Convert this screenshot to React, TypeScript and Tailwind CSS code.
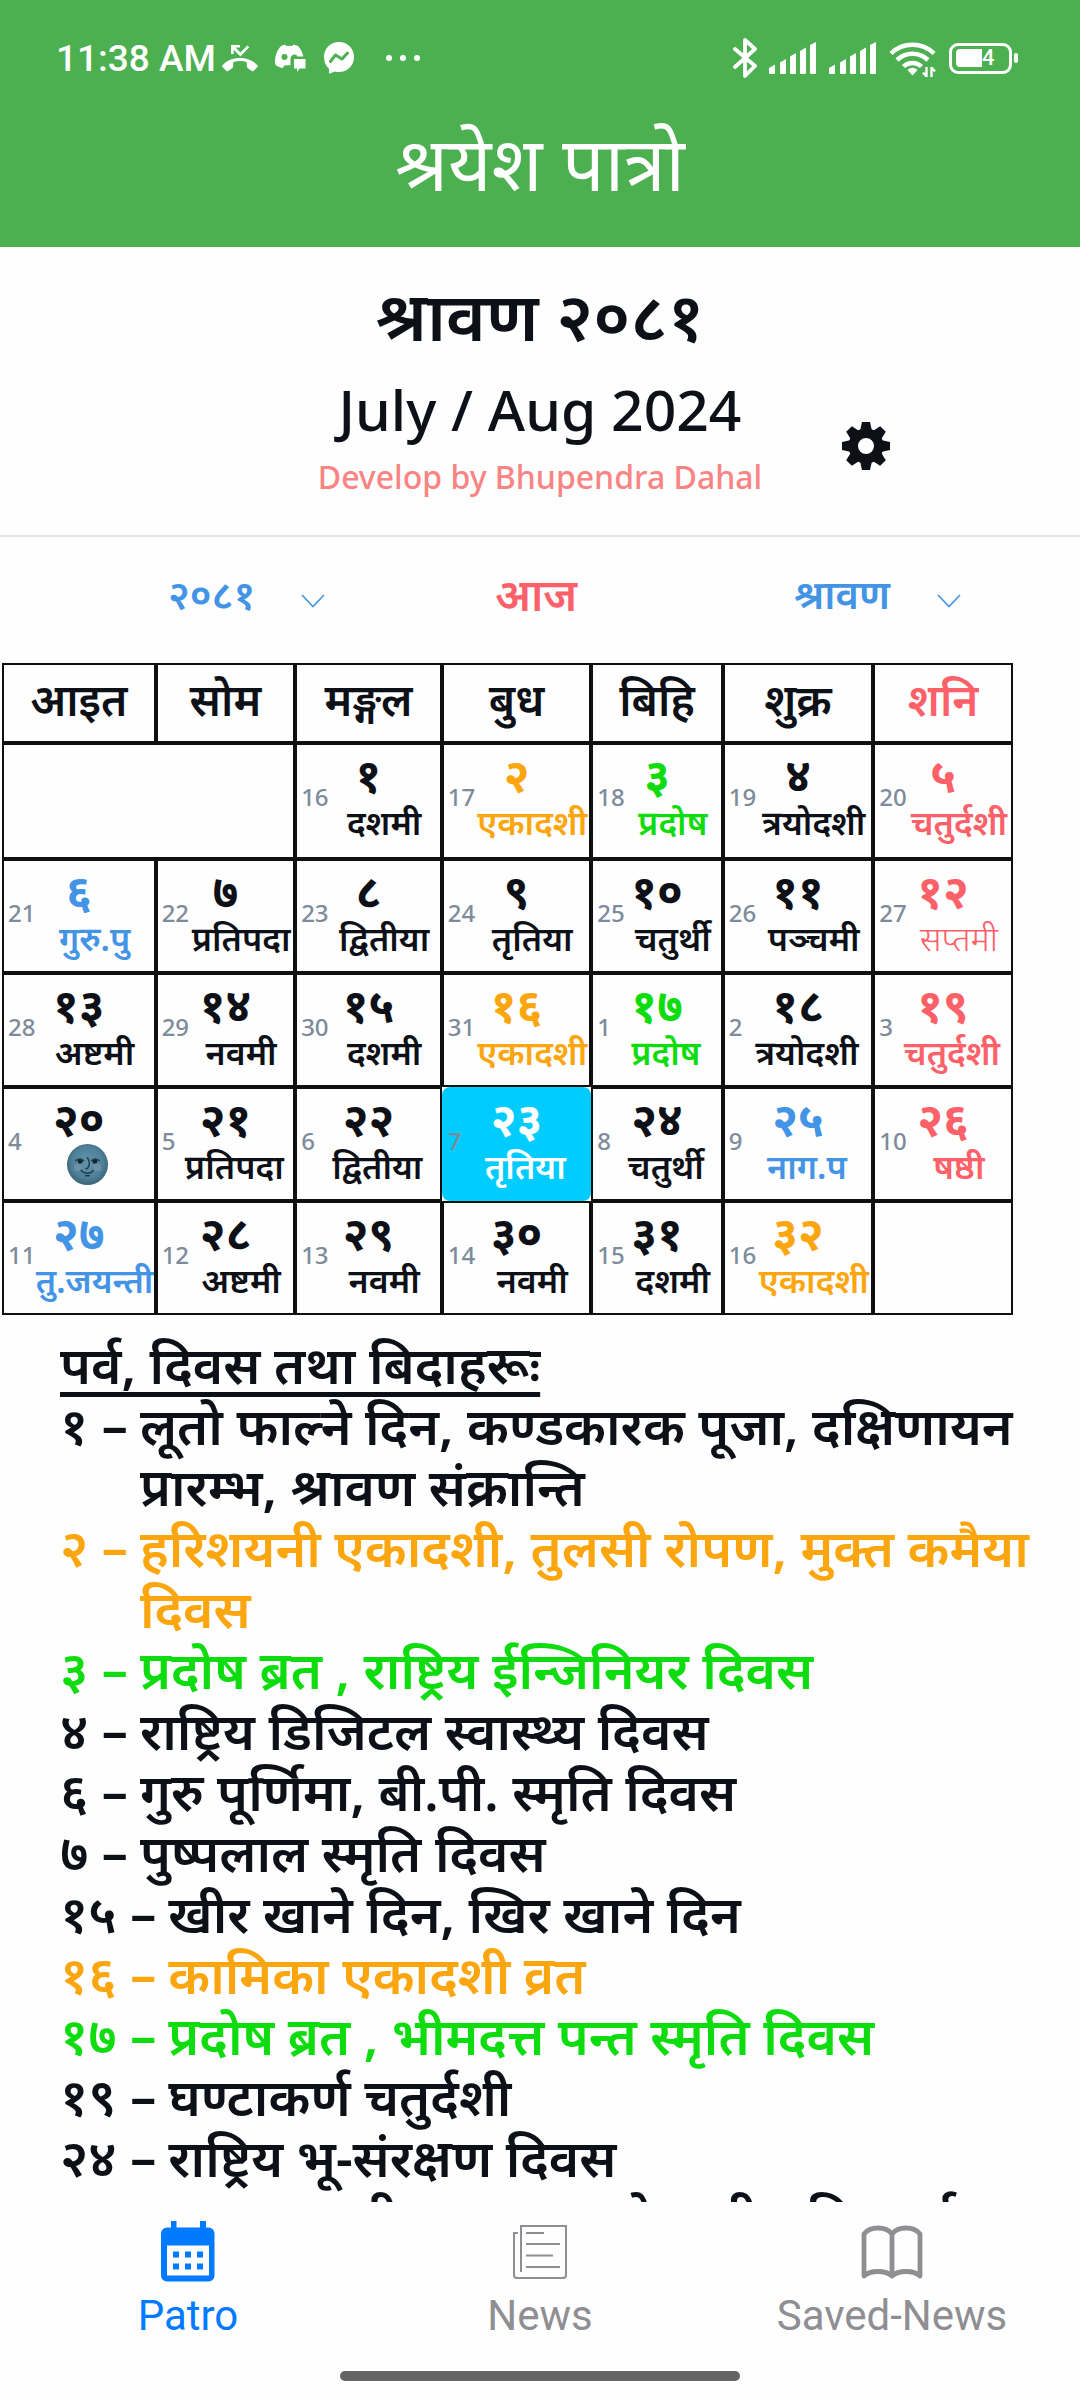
import React from "react";

type Tone = "ink" | "amber" | "green" | "red" | "blue" | "white";

const toneClass: Record<Tone, string> = {
  ink: "text-[#0d1117]",
  amber: "text-[#fba50f]",
  green: "text-[#0fdc0f]",
  red: "text-[#fc6068]",
  blue: "text-[#4394e5]",
  white: "text-white",
};

type Day = {
  ad: string;
  bs: string;
  tithi: string;
  tone?: Tone;
  today?: boolean;
  moon?: boolean;
  light?: boolean;
};

const weekdays = ["आइत", "सोम", "मङ्गल", "बुध", "बिहि", "शुक्र", "शनि"];

const weeks: (Day | null)[][] = [
  [
    { ad: "16", bs: "१", tithi: "दशमी" },
    { ad: "17", bs: "२", tithi: "एकादशी", tone: "amber" },
    { ad: "18", bs: "३", tithi: "प्रदोष", tone: "green" },
    { ad: "19", bs: "४", tithi: "त्रयोदशी" },
    { ad: "20", bs: "५", tithi: "चतुर्दशी", tone: "red" },
  ],
  [
    { ad: "21", bs: "६", tithi: "गुरु.पु", tone: "blue" },
    { ad: "22", bs: "७", tithi: "प्रतिपदा" },
    { ad: "23", bs: "८", tithi: "द्वितीया" },
    { ad: "24", bs: "९", tithi: "तृतिया" },
    { ad: "25", bs: "१०", tithi: "चतुर्थी" },
    { ad: "26", bs: "११", tithi: "पञ्चमी" },
    { ad: "27", bs: "१२", tithi: "सप्तमी", tone: "red", light: true },
  ],
  [
    { ad: "28", bs: "१३", tithi: "अष्टमी" },
    { ad: "29", bs: "१४", tithi: "नवमी" },
    { ad: "30", bs: "१५", tithi: "दशमी" },
    { ad: "31", bs: "१६", tithi: "एकादशी", tone: "amber" },
    { ad: "1", bs: "१७", tithi: "प्रदोष", tone: "green" },
    { ad: "2", bs: "१८", tithi: "त्रयोदशी" },
    { ad: "3", bs: "१९", tithi: "चतुर्दशी", tone: "red" },
  ],
  [
    { ad: "4", bs: "२०", tithi: "", moon: true },
    { ad: "5", bs: "२१", tithi: "प्रतिपदा" },
    { ad: "6", bs: "२२", tithi: "द्वितीया" },
    { ad: "7", bs: "२३", tithi: "तृतिया", tone: "white", today: true },
    { ad: "8", bs: "२४", tithi: "चतुर्थी" },
    { ad: "9", bs: "२५", tithi: "नाग.प", tone: "blue" },
    { ad: "10", bs: "२६", tithi: "षष्ठी", tone: "red" },
  ],
  [
    { ad: "11", bs: "२७", tithi: "तु.जयन्ती", tone: "blue" },
    { ad: "12", bs: "२८", tithi: "अष्टमी" },
    { ad: "13", bs: "२९", tithi: "नवमी" },
    { ad: "14", bs: "३०", tithi: "नवमी" },
    { ad: "15", bs: "३१", tithi: "दशमी" },
    { ad: "16", bs: "३२", tithi: "एकादशी", tone: "amber" },
    null,
  ],
];

const events: { day: string; text: string; tone?: Tone }[] = [
  { day: "१", text: "लूतो फाल्ने दिन, कण्डकारक पूजा, दक्षिणायन प्रारम्भ, श्रावण संक्रान्ति" },
  { day: "२", text: "हरिशयनी एकादशी, तुलसी रोपण, मुक्त कमैया दिवस", tone: "amber" },
  { day: "३", text: "प्रदोष ब्रत , राष्ट्रिय ईन्जिनियर दिवस", tone: "green" },
  { day: "४", text: "राष्ट्रिय डिजिटल स्वास्थ्य दिवस" },
  { day: "६", text: "गुरु पूर्णिमा, बी.पी. स्मृति दिवस" },
  { day: "७", text: "पुष्पलाल स्मृति दिवस" },
  { day: "१५", text: "खीर खाने दिन, खिर खाने दिन" },
  { day: "१६", text: "कामिका एकादशी व्रत", tone: "amber" },
  { day: "१७", text: "प्रदोष ब्रत , भीमदत्त पन्त स्मृति दिवस", tone: "green" },
  { day: "१९", text: "घण्टाकर्ण चतुर्दशी" },
  { day: "२४", text: "राष्ट्रिय भू-संरक्षण दिवस" },
  { day: "२५", text: "नाग पञ्चमी, फल जलको बागी र दिन पर्व" },
];

function MissedCallIcon() {
  return (
    <svg viewBox="0 0 36 28" className="h-7 w-9" fill="currentColor" aria-hidden="true">
      <path d="M9 1h9v2.6h-4.5l4.9 5L25.4 1.4l1.9 1.9-8.9 9.2-6.7-6.8V10H9z" />
      <path d="M18 14c7 0 13 2.500 17.500 7.200.500.600.500 1.100 0 1.700l-4 4c-.500.500-1.200.500-1.700 0l-4.200-3c-.500-.400-.800-.800-.800-1.400v-4.300a22 22 0 0 0-13.600 0v4.300c0 .600-.300 1-.800 1.400l-4.200 3c-.500.500-1.200.500-1.700 0l-4-4c-.500-.600-.500-1.100 0-1.700C5 16.500 11 14 18 14z" />
    </svg>
  );
}

function DiscordIcon() {
  return (
    <svg viewBox="0 0 32 28" className="h-7 w-8" aria-hidden="true">
      <path
        fill="currentColor"
        d="M7 2l4-1.500 1.200 1.500a20 20 0 0 1 6 0L19.500.500 24 2c3 3.500 5.500 8 5.500 12H18v7l-8 .500L9 24C5 23.500 2.500 22 1 20 .500 13 3 6 7 2z"
      />
      <circle cx="10.500" cy="13" r="3" fill="#4caf50" />
      <path fill="#4caf50" d="M16.500 24V15c0-3 2-4.500 4-4.500 1.500 0 2.500.800 2.800 2H31v13H17z" />
      <path fill="currentColor" d="M20 15h11.500v9.500H25.500L23 28v-3.500h-3z" />
    </svg>
  );
}

function MessengerIcon() {
  return (
    <svg viewBox="0 0 30 32" className="h-8 w-[30px]" aria-hidden="true">
      <path
        fill="currentColor"
        d="M15 0c8.400 0 15 6.300 15 15s-6.600 15-15 15c-1.500 0-3-.200-4.300-.600L6 31.500c-.700.300-1-.100-1-.700v-4C1.800 24 0 19.800 0 15 0 6.300 6.600 0 15 0z"
      />
      <path
        d="M6.500 19.500l5-6.500 6.500 4 5.500-6"
        fill="none"
        stroke="#4caf50"
        strokeWidth="3"
        strokeLinejoin="round"
        strokeLinecap="round"
      />
    </svg>
  );
}

function BluetoothIcon() {
  return (
    <svg
      viewBox="0 0 24 40"
      className="h-10 w-6"
      fill="none"
      stroke="currentColor"
      strokeWidth="3.800"
      strokeLinecap="round"
      strokeLinejoin="round"
      aria-hidden="true"
    >
      <path d="M2 11l20 17-10 10V2l10 9L2 29" />
    </svg>
  );
}

function SignalIcon() {
  return (
    <svg viewBox="0 0 48 32" className="h-8 w-12" fill="currentColor" aria-hidden="true">
      <path d="M0 31v-5l6-3.500V31q0 1-1 1H1q-1 0-1-1z" />
      <path d="M11 31V20.500l6-3.500v14q0 1-1 1h-4q-1 0-1-1z" />
      <path d="M21 31V14.500l6-3.500v20q0 1-1 1h-4q-1 0-1-1z" />
      <path d="M31 31V9l6-3.500V31q0 1-1 1h-4q-1 0-1-1z" />
      <path d="M41 31V3l6-3v31q0 1-1 1h-4q-1 0-1-1z" />
    </svg>
  );
}

function WifiIcon() {
  return (
    <svg viewBox="0 0 48 37" className="h-[37px] w-12" aria-hidden="true">
      <g fill="none" stroke="currentColor" strokeWidth="4.500">
        <path d="M2 13.500a31 31 0 0 1 43 0" />
        <path d="M8 20a22.500 22.500 0 0 1 31 0" />
        <path d="M14.500 26.500a13 13 0 0 1 18 0" />
      </g>
      <path d="M18.500 30c3-3 7-3 10 0l-5 5.500z" fill="currentColor" />
      <path
        d="M37.500 27v10M34 32.500l3.500 4M42.500 37V27M46 31.500l-3.500-4"
        stroke="currentColor"
        strokeWidth="2.400"
        fill="none"
      />
    </svg>
  );
}

function BatteryIcon() {
  return (
    <span className="flex items-center gap-0.5" role="img" aria-label="Battery 4">
      <span className="flex h-[31px] w-[63px] items-center rounded-[9px] border-[3px] border-white px-1">
        <span className="h-[18px] w-[26px] rounded-l bg-white" />
        <span className="font-['Roboto'] text-[22px] leading-none font-medium">4</span>
      </span>
      <span className="h-2.5 w-1 rounded-full bg-white" />
    </span>
  );
}

function GearIcon() {
  const angles = [0, 45, 90, 135, 180, 225, 270, 315];
  return (
    <svg viewBox="0 0 48 48" className="h-12 w-12" fill="currentColor" aria-hidden="true">
      <path
        fillRule="evenodd"
        d="M24 6.500a17.500 17.500 0 1 1 0 35a17.500 17.500 0 0 1 0-35zm0 9.500a8 8 0 1 0 0 16a8 8 0 0 0 0-16z"
      />
      {angles.map((angle) => (
        <path key={angle} d="M20 0h8l2 9H18z" transform={`rotate(${angle} 24 24)`} />
      ))}
    </svg>
  );
}

function MoonFace() {
  return (
    <svg viewBox="0 0 44 44" className="h-[43px] w-[43px]" role="img" aria-label="औंसी">
      <defs>
        <radialGradient id="moon" cx="0.5" cy="0.45" r="0.55">
          <stop offset="0" stopColor="#6394ae" />
          <stop offset="0.7" stopColor="#4f8099" />
          <stop offset="1" stopColor="#396276" />
        </radialGradient>
      </defs>
      <circle cx="22" cy="22" r="21" fill="url(#moon)" />
      <circle cx="12" cy="25" r="4" fill="#8196a8" opacity="0.6" />
      <circle cx="32" cy="25" r="4" fill="#8196a8" opacity="0.6" />
      <circle cx="14.500" cy="18.500" r="2.600" fill="#16242c" />
      <circle cx="29.500" cy="18.500" r="2.600" fill="#16242c" />
      <path
        d="M10 18c2-2 6-2 8 0M26 18c2-2 6-2 8 0M22 15c2 4 3 7 0 11h-1.500M15.500 28c3 4 10 4 12.500 0M20 33.500h4"
        fill="none"
        stroke="#223c49"
        strokeWidth="1.500"
        strokeLinecap="round"
      />
    </svg>
  );
}

function Chevron() {
  return (
    <svg
      viewBox="0 0 24 14"
      className="pointer-events-none absolute right-0 top-1/2 h-3.5 w-6"
      fill="none"
      stroke="currentColor"
      strokeWidth="1.600"
      aria-hidden="true"
    >
      <path d="M1 1l11 11.500L23 1" />
    </svg>
  );
}

function CalendarIcon() {
  return (
    <svg viewBox="0 0 54 62" className="h-[62px] w-[54px]" fill="currentColor" aria-hidden="true">
      <path
        fillRule="evenodd"
        d="M10 0h5.500v6.500h23.500V0h6v6.500h2.500a6 6 0 0 1 6 6v42a6 6 0 0 1-6 6H6a6 6 0 0 1-6-6v-42a6 6 0 0 1 6-6h4zM6 24.500v30h42v-30z"
      />
      <path d="M12 30.500h6v6h-6zM24 30.500h6v6h-6zM36 30.500h6v6h-6zM12 42.500h6v6h-6zM24 42.500h6v6h-6zM36 42.500h6v6h-6z" />
    </svg>
  );
}

function NewspaperIcon() {
  return (
    <svg
      viewBox="0 0 54 62"
      className="h-[62px] w-[54px]"
      fill="none"
      stroke="currentColor"
      strokeWidth="2"
      aria-hidden="true"
    >
      <path d="M8 51V5h45v49q0 3-3 3H4q-3 0-3-3V12h4M13 12h18M13 23h34M13 34.500h27M13 46h34" />
    </svg>
  );
}

function BookIcon() {
  return (
    <svg
      viewBox="0 0 62 62"
      className="h-[62px] w-[62px]"
      fill="none"
      stroke="currentColor"
      strokeWidth="4.800"
      strokeLinejoin="round"
      aria-hidden="true"
    >
      <path d="M31 13C25 5 9 5 3 13v42c6-6 22-6 28 0 6-6 22-6 28 0V13C53 5 37 5 31 13zM31 13v42" />
    </svg>
  );
}

function Picker({ label, value, options, className }: { label: string; value: string; options: string[]; className: string }) {
  return (
    <div className={`relative text-[#4394e5] ${className}`}>
      <select
        aria-label={label}
        defaultValue={value}
        className="w-full appearance-none bg-transparent text-[40px] leading-[60px] font-semibold outline-none"
      >
        {options.map((option) => (
          <option key={option}>{option}</option>
        ))}
      </select>
      <Chevron />
    </div>
  );
}

function DayCell({ day }: { day: Day | null }) {
  if (!day) return <td className="border-2 border-[#0f1010]" />;
  const tone = toneClass[day.tone ?? "ink"];
  return (
    <td
      className={
        day.today
          ? "rounded-lg border-2 border-[#00ccff] bg-[#00ccff] p-0 align-top"
          : "border-2 border-[#0f1010] p-0 align-top"
      }
    >
      <div className={`flex flex-col pt-1 ${tone}`}>
        <div className="text-center text-[46px] leading-[50px] font-bold">{day.bs}</div>
        <div className="flex items-start pl-1">
          <span className="-mt-4 text-[24px] leading-[28px] font-medium text-[#7d8b9b]">{day.ad}</span>
          <span
            className={
              day.light
                ? "flex h-12 flex-1 justify-center text-[34px] leading-[46px] font-light whitespace-nowrap"
                : "flex h-12 flex-1 justify-center text-[34px] leading-[46px] font-semibold whitespace-nowrap"
            }
          >
            {day.moon ? <MoonFace /> : day.tithi}
          </span>
        </div>
      </div>
    </td>
  );
}

const navItems = [
  { label: "Patro", icon: <CalendarIcon />, active: true },
  { label: "News", icon: <NewspaperIcon />, active: false },
  { label: "Saved-News", icon: <BookIcon />, active: false },
];

export default function App() {
  return (
    <div className="flex h-screen flex-col overflow-hidden bg-[#fefefe] font-['Noto_Sans','Noto_Sans_Devanagari',sans-serif] text-[#0d1117]">
      <header className="bg-[#4caf50] text-white">
        <div className="flex h-[116px] items-center justify-between pr-[62px] pl-[56px]">
          <div className="flex items-center">
            <span className="mr-1.5 font-['Roboto'] text-[37px] leading-none font-medium">11:38 AM</span>
            <MissedCallIcon />
            <span className="ml-4 flex">
              <DiscordIcon />
            </span>
            <span className="ml-[18px] flex">
              <MessengerIcon />
            </span>
            <span className="ml-8 flex gap-2" aria-hidden="true">
              <span className="h-1.5 w-1.5 rounded-full bg-white" />
              <span className="h-1.5 w-1.5 rounded-full bg-white" />
              <span className="h-1.5 w-1.5 rounded-full bg-white" />
            </span>
          </div>
          <div className="flex items-center gap-3">
            <BluetoothIcon />
            <SignalIcon />
            <SignalIcon />
            <WifiIcon />
            <BatteryIcon />
          </div>
        </div>
        <div className="flex h-[131px] items-start justify-center">
          <h1 className="text-[75px] leading-[92px]">श्रयेश पात्रो</h1>
        </div>
      </header>

      <main className="min-h-0 flex-1 overflow-hidden">
        <section className="grid h-[290px] grid-cols-[1fr_auto_1fr] border-b-2 border-[#e3e3e3] pt-4">
          <div className="col-start-2 text-center">
            <h2 className="text-[68px] leading-[104px] font-semibold">श्रावण २०८१</h2>
            <p className="text-[57px] leading-[84px] font-medium">July / Aug 2024</p>
            <p className="text-[32px] leading-[52px] font-medium text-[#f98484]">Develop by Bhupendra Dahal</p>
          </div>
          <button type="button" aria-label="Settings" className="mt-[159px] ml-20 h-12 w-12">
            <GearIcon />
          </button>
        </section>

        <div className="flex h-[126px] items-center justify-between pr-[119px] pb-3 pl-[168px]">
          <Picker label="वर्ष" value="२०८१" options={["२०८०", "२०८१", "२०८२"]} className="w-[157px]" />
          <button type="button" className="mr-12 w-[81px] text-[44px] leading-[60px] font-semibold text-[#fc6068]">
            आज
          </button>
          <Picker label="महिना" value="श्रावण" options={["असार", "श्रावण", "भदौ"]} className="w-[167px]" />
        </div>

        <table className="ml-0.5 w-[93.6%] table-fixed border-separate border-spacing-0">
          <colgroup>
            <col className="w-[15.2%]" />
            <col className="w-[13.8%]" />
            <col className="w-[14.5%]" />
            <col className="w-[14.8%]" />
            <col className="w-[13%]" />
            <col className="w-[14.9%]" />
            <col className="w-[13.8%]" />
          </colgroup>
          <thead>
            <tr className="h-20">
              {weekdays.map((name, index) => (
                <th
                  key={name}
                  scope="col"
                  className={
                    index === 6
                      ? "border-2 border-[#0f1010] p-0 pb-2 text-[44px] leading-[60px] font-semibold text-[#fc6068]"
                      : "border-2 border-[#0f1010] p-0 pb-2 text-[44px] leading-[60px] font-semibold"
                  }
                >
                  {name}
                </th>
              ))}
            </tr>
          </thead>
          <tbody>
            {weeks.map((week, row) => (
              <tr key={row} className={row === 0 ? "h-[116px]" : "h-[114px]"}>
                {row === 0 && <td colSpan={2} className="border-2 border-[#0f1010]" />}
                {week.map((day, index) => (
                  <DayCell key={index} day={day} />
                ))}
              </tr>
            ))}
          </tbody>
        </table>

        <section className="pt-[18px] pr-8 pl-[60px] text-[52px] leading-[61px] font-semibold">
          <h3 className="underline decoration-[5px] underline-offset-[8px]">पर्व, दिवस तथा बिदाहरूः</h3>
          <ul>
            {events.map((event) => (
              <li key={event.day} className={`flex gap-3 ${toneClass[event.tone ?? "ink"]}`}>
                <span className="whitespace-nowrap">{event.day} –</span>
                <span>{event.text}</span>
              </li>
            ))}
          </ul>
        </section>
      </main>

      <footer className="h-[198px] shrink-0 font-['Roboto']">
        <nav className="grid grid-cols-3 px-3 pt-[19px]">
          {navItems.map((item) => (
            <a
              key={item.label}
              href={`#${item.label}`}
              className={
                item.active
                  ? "flex flex-col items-center gap-2 text-[#007aff]"
                  : "flex flex-col items-center gap-2 text-[#8e8e93]"
              }
            >
              {item.icon}
              <span className="text-[42px] leading-[50px]">{item.label}</span>
            </a>
          ))}
        </nav>
        <div className="mx-auto mt-[30px] h-2.5 w-[37%] rounded-full bg-[#646464]" />
      </footer>
    </div>
  );
}
